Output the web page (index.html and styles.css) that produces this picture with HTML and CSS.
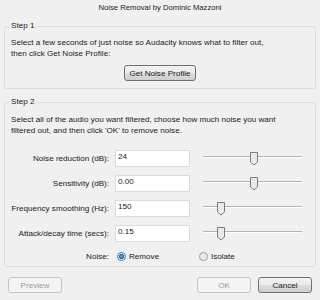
FILE: index.html
```html
<!DOCTYPE html>
<html lang="en">
<head>
    <meta charset="UTF-8">
    <title>Noise Removal</title>
    <link rel="stylesheet" href="styles.css">
</head>
<body>
    <div class="dialog">
        <div class="title">Noise Removal by Dominic Mazzoni</div>

        <fieldset class="group step1">
            <legend>Step 1</legend>
            <p>Select a few seconds of just noise so Audacity knows what to filter out,<br>then click Get Noise Profile:</p>
            <div class="center">
                <button class="btn profile">Get Noise Profile</button>
            </div>
        </fieldset>

        <fieldset class="group step2">
            <legend>Step 2</legend>
            <p>Select all of the audio you want filtered, choose how much noise you want<br>filtered out, and then click 'OK' to remove noise.</p>

            <div class="params">
                <label>Noise reduction (dB):</label>
                <input type="text" value="24">
                <svg class="slider" width="99" height="17">
                    <path d="M0 6.5h99" stroke="#b4b4b4"/>
                    <path d="M0 7.5h99" stroke="#ffffff"/>
                    <path d="M47.5 2.5h7v9.5l-3.5 3l-3.5-3z" fill="#eaeaea" stroke="#7c7c7c"/>
                </svg>

                <label>Sensitivity (dB):</label>
                <input type="text" value="0.00">
                <svg class="slider" width="99" height="17">
                    <path d="M0 6.5h99" stroke="#b4b4b4"/>
                    <path d="M0 7.5h99" stroke="#ffffff"/>
                    <path d="M47.5 2.5h7v9.5l-3.5 3l-3.5-3z" fill="#eaeaea" stroke="#7c7c7c"/>
                </svg>

                <label>Frequency smoothing (Hz):</label>
                <input type="text" value="150">
                <svg class="slider" width="99" height="17">
                    <path d="M0 6.5h99" stroke="#b4b4b4"/>
                    <path d="M0 7.5h99" stroke="#ffffff"/>
                    <path d="M14.5 2.5h7v9.5l-3.5 3l-3.5-3z" fill="#eaeaea" stroke="#7c7c7c"/>
                </svg>

                <label>Attack/decay time (secs):</label>
                <input type="text" value="0.15">
                <svg class="slider" width="99" height="17">
                    <path d="M0 6.5h99" stroke="#b4b4b4"/>
                    <path d="M0 7.5h99" stroke="#ffffff"/>
                    <path d="M14.5 2.5h7v9.5l-3.5 3l-3.5-3z" fill="#eaeaea" stroke="#7c7c7c"/>
                </svg>

                <label class="noise-label">Noise:</label>
                <div class="radios">
                    <label class="radio"><input type="radio" name="noise" checked> Remove</label>
                    <label class="radio"><input type="radio" name="noise"> Isolate</label>
                </div>
            </div>
        </fieldset>

        <div class="footer">
            <button class="btn" disabled>Preview</button>
            <div class="right">
                <button class="btn" disabled>OK</button>
                <button class="btn">Cancel</button>
            </div>
        </div>
    </div>
</body>
</html>
```

FILE: styles.css
```css
body {
    margin: 0;
    background: #f0f0f0;
    font-family: "Liberation Sans", Arial, sans-serif;
    font-size: 8.1px;
    color: #1a1a1a;
}
.dialog {
    width: 320px;
    height: 300px;
}
.title {
    text-align: center;
    font-size: 7.7px;
    line-height: 10px;
    padding-top: 3px;
    height: 18px;
}
.group {
    margin: 0 4px;
    padding: 0;
    border: 1px solid #d9dde0;
    border-radius: 3px;
    min-width: 0;
}
.group legend {
    margin-left: 5px;
    padding: 0 1px;
    line-height: 10px;
}
.group p {
    margin: 0;
    padding-left: 6px;
    line-height: 10.5px;
}
.step1 p {
    padding-top: 7px;
}
.step1 {
    padding-bottom: 7px;
}
.center {
    text-align: center;
    margin-top: 6px;
}
.step2 {
    margin-top: 8px;
    padding-bottom: 4px;
}
.step2 p {
    padding-top: 8px;
}
.params {
    display: grid;
    grid-template-columns: 104px 75px 112px;
    grid-template-rows: 17px 17px 17px 17px 12px;
    column-gap: 6px;
    row-gap: 8px;
    margin-top: 14px;
    align-items: center;
}
.params > label {
    text-align: right;
}
.params input[type="text"] {
    box-sizing: border-box;
    width: 75px;
    height: 17px;
    margin: 0;
    padding: 0 2px 4px;
    border: 1px solid #dcdcdc;
    background: #fff;
    font: inherit;
    color: #1a1a1a;
}
.slider {
    margin-left: 7px;
    display: block;
}
.radios {
    grid-column: 2 / 4;
    display: flex;
}
.radio {
    display: flex;
    align-items: center;
    width: 82px;
    gap: 3px;
}
.radio input {
    appearance: none;
    margin: 0 0 0 2px;
    width: 9px;
    height: 9px;
    border: 1px solid #9a9a9a;
    border-radius: 50%;
    background: radial-gradient(circle, #e2e2e2 0%, #f7f7f7 100%);
    box-sizing: border-box;
}
.radio input:checked {
    border-color: #3c7fb1;
    background: radial-gradient(circle, #5ab6ee 0%, #1f6aa8 45%, #dfe9f2 55%, #f4f8fb 100%);
}
.btn {
    box-sizing: border-box;
    height: 16px;
    padding: 0;
    border: 1px solid #707070;
    border-radius: 3px;
    background: linear-gradient(#f2f2f2 0%, #ebebeb 50%, #dddddd 51%, #cfcfcf 100%);
    font: inherit;
    color: #1a1a1a;
}
.btn:disabled {
    border-color: #c4c4c4;
    background: #f4f4f4;
    color: #9a9a9a;
}
.profile {
    width: 72px;
}
.footer {
    display: flex;
    justify-content: space-between;
    padding: 0 8px;
    margin-top: 10px;
}
.footer .btn {
    width: 54px;
}
.right {
    display: flex;
    gap: 7px;
}
```
